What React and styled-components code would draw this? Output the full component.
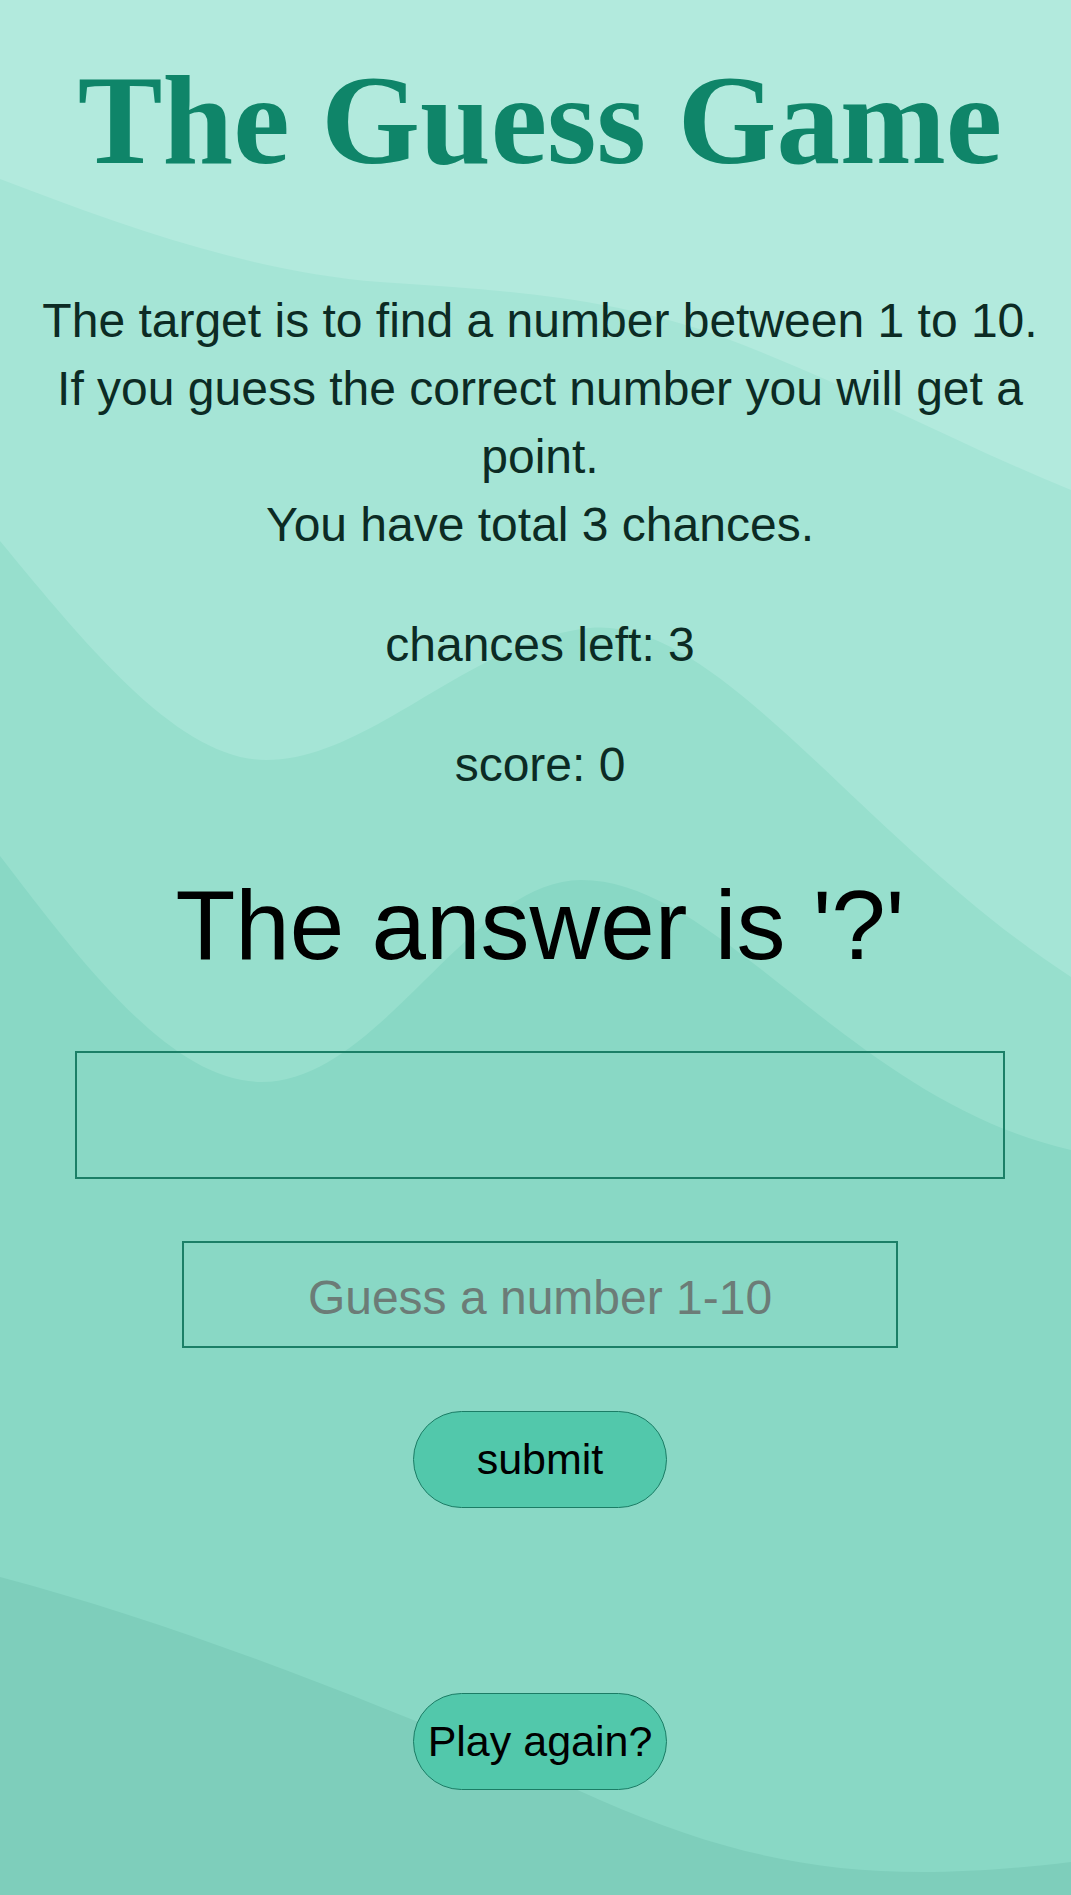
import React, { useState } from "react";
import styled, { createGlobalStyle } from "styled-components";

const GlobalStyle = createGlobalStyle`
  html, body {
    margin: 0;
    padding: 0;
  }
  body {
    font-family: "Liberation Sans", Arial, sans-serif;
  }
`;

const Page = styled.main`
  position: relative;
  min-height: 1895px;
  overflow: hidden;
  background: #b2eadd;
`;

const Waves = styled.svg`
  position: absolute;
  inset: 0;
  width: 100%;
  height: 100%;
  z-index: 0;
`;

const Content = styled.div`
  position: relative;
  z-index: 1;
  display: flex;
  flex-direction: column;
  align-items: center;
  padding: 57px 9px 0 18px;
  text-align: center;
`;

const Title = styled.h1`
  margin: 0;
  font-family: "Liberation Serif", "Times New Roman", serif;
  font-weight: 700;
  font-size: 127px;
  line-height: 127px;
  color: #0f8569;
`;

const Rules = styled.p`
  margin: 103px 0 0;
  font-size: 48px;
  line-height: 68px;
  color: #0c2b24;
`;

const Stat = styled.p`
  margin: 52px 0 0;
  font-size: 48px;
  line-height: 68px;
  color: #0c2b24;
`;

const Answer = styled.h2`
  margin: 70px 0 0;
  font-weight: 400;
  font-size: 98px;
  line-height: 113px;
  color: #000;
`;

const AnswerBox = styled.div`
  margin-top: 69px;
  width: 930px;
  height: 128px;
  box-sizing: border-box;
  border: 2px solid #1b7f67;
`;

const GuessInput = styled.input`
  margin-top: 62px;
  width: 716px;
  height: 107px;
  box-sizing: border-box;
  border: 2px solid #1b7f67;
  padding: 6px 0 0;
  background: transparent;
  font-family: "Liberation Sans", Arial, sans-serif;
  font-size: 48px;
  text-align: center;
  color: #0c2b24;
  outline: none;

  &::placeholder {
    color: #6c7c77;
  }
`;

const PillButton = styled.button`
  margin-top: ${(p) => p.$gap}px;
  width: 254px;
  height: 97px;
  box-sizing: border-box;
  border: 1.5px solid #1b7c65;
  border-radius: 49px;
  background: #52c8ab;
  font-family: "Liberation Sans", Arial, sans-serif;
  font-size: 43px;
  color: #000;
  padding: 0;
  cursor: pointer;
`;

const App = () => {
  const [guess, setGuess] = useState("");

  return (
    <Page>
      <GlobalStyle />
      <Waves viewBox="0 0 1071 1895" preserveAspectRatio="none">
        <path
          d="M0 179 C120 225 250 272 380 282 C500 290 610 296 725 338 C850 385 960 445 1071 490 L1071 1895 L0 1895 Z"
          fill="#a5e5d6"
        />
        <path
          d="M0 541 C90 650 180 760 266 760 C370 760 470 640 590 628 C720 616 860 840 1071 977 L1071 1895 L0 1895 Z"
          fill="#97dfcd"
        />
        <path
          d="M0 856 C80 960 170 1082 262 1082 C380 1082 470 880 581 880 C720 880 850 1100 1071 1150 L1071 1895 L0 1895 Z"
          fill="#89d8c5"
        />
        <path
          d="M0 1577 C200 1630 420 1720 600 1800 C760 1870 880 1885 1071 1862 L1071 1895 L0 1895 Z"
          fill="#7ecebb"
        />
      </Waves>
      <Content>
        <Title>The Guess Game</Title>
        <Rules>
          The target is to find a number between 1 to 10.
          <br />
          If you guess the correct number you will get a point.
          <br />
          You have total 3 chances.
        </Rules>
        <Stat>chances left: 3</Stat>
        <Stat>score: 0</Stat>
        <Answer>The answer is '?'</Answer>
        <AnswerBox />
        <GuessInput
          type="text"
          placeholder="Guess a number 1-10"
          value={guess}
          onChange={(e) => setGuess(e.target.value)}
        />
        <PillButton $gap={63}>submit</PillButton>
        <PillButton $gap={185}>Play again?</PillButton>
      </Content>
    </Page>
  );
};

export default App;
